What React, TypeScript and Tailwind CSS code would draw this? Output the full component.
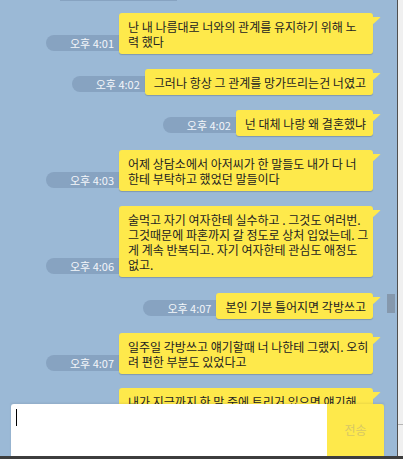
const messages = [
  { time: "오후 4:01", lines: ["난 내 나름대로 너와의 관계를 유지하기 위해 노", "력 했다"], gap: "mt-[12px]" },
  { time: "오후 4:02", lines: ["그러나 항상 그 관계를 망가뜨리는건 너였고"], gap: "mt-[15px]" },
  { time: "오후 4:02", lines: ["넌 대체 나랑 왜 결혼했냐"], gap: "mt-[15px]" },
  { time: "오후 4:03", lines: ["어제 상담소에서 아저씨가 한 말들도 내가 다 너", "한테 부탁하고 했었던 말들이다"], gap: "mt-[14px]" },
  {
    time: "오후 4:06",
    lines: [
      "술먹고 자기 여자한테 실수하고 . 그것도 여러번.",
      "그것때문에 파혼까지 갈 정도로 상처 입었는데. 그",
      "게 계속 반복되고. 자기 여자한테 관심도 애정도",
      "없고.",
    ],
    gap: "mt-[15px]",
  },
  { time: "오후 4:07", lines: ["본인 기분 틀어지면 각방쓰고"], gap: "mt-[16px]" },
  { time: "오후 4:07", lines: ["일주일 각방쓰고 얘기할때 너 나한테 그랬지. 오히", "려 편한 부분도 있었다고"], gap: "mt-[14px]" },
  { time: "오후 4:08", lines: ["내가 지금까지 한 말 중에 트리거 있으면 얘기해", "줘"], gap: "mt-[14px]" },
];

function Bubble({ time, lines, gap }: { time: string; lines: string[]; gap: string }) {
  // wrapped messages fill the max bubble width
  const wide = lines.length > 1;
  return (
    <div className={`flex items-end justify-end ${gap}`}>
      <div className="mb-[3px] flex h-[16px] w-[73px] items-center justify-end rounded-l-full bg-[#87a3c1] pr-[5px] text-[11px] leading-none text-[#f3f6fa]">
        {time}
      </div>
      <div
        className={`relative rounded-[3px] bg-[#fee94b] pl-[9px] pr-[7px] pt-[6px] pb-[5px] shadow-[0_1px_1px_rgba(0,0,0,0.18)] ${
          wide ? "w-[254px]" : ""
        }`}
      >
        <p className="whitespace-nowrap text-[12px] leading-[15px] text-[#222]">
          {lines.map((l, i) => (
            <span key={i}>
              {i > 0 && <br />}
              {l}
            </span>
          ))}
        </p>
        <svg className="absolute -right-[8px] top-[4px]" width="9" height="9" viewBox="0 0 9 9">
          <path d="M0 0 L8.5 0 Q7 2 0 8 Z" fill="#fee94b" />
        </svg>
      </div>
    </div>
  );
}

export default function App() {
  return (
    <div
      className="flex h-[459px] w-[403px] flex-col overflow-hidden bg-[#e9e9e9]"
      style={{ fontFamily: '"Noto Sans CJK KR", "Noto Sans", sans-serif' }}
    >
      <div className="flex min-h-0 flex-1">
        <div className="relative w-[397px] overflow-hidden bg-[#9bb9d6]">
          <div className="pr-[24px]">
            <div className="ml-[60px] h-px w-[117px] bg-[#87a3c1]" />
            {messages.map((m, i) => (
              <Bubble key={i} {...m} />
            ))}
          </div>

          <div className="absolute right-[2px] top-[294px] h-[19px] w-[8px] bg-[#8598ad]" />

          <div className="absolute bottom-0 left-[11px] right-[13px] flex h-[52px] shadow-[0_-1px_2px_rgba(0,0,0,0.08)]">
            <div className="flex-1 rounded-tl-[3px] bg-white pl-[5px] pt-[5px]">
              <div className="h-[17px] w-px bg-black" />
            </div>
            <div className="flex w-[57px] items-center justify-center rounded-tr-[3px] bg-[#fee94b] text-[12px] text-[#d6c765]">
              전송
            </div>
          </div>
        </div>
        <div className="w-px bg-[#4f4f4f]" />
        <div className="relative flex-1 bg-[#f0f0f0]">
          <div className="absolute left-0 right-0 top-[424px] h-px bg-[#b5b5b5]" />
        </div>
      </div>
      <div className="h-[3px] bg-[#3d3d3d]" />
    </div>
  );
}
